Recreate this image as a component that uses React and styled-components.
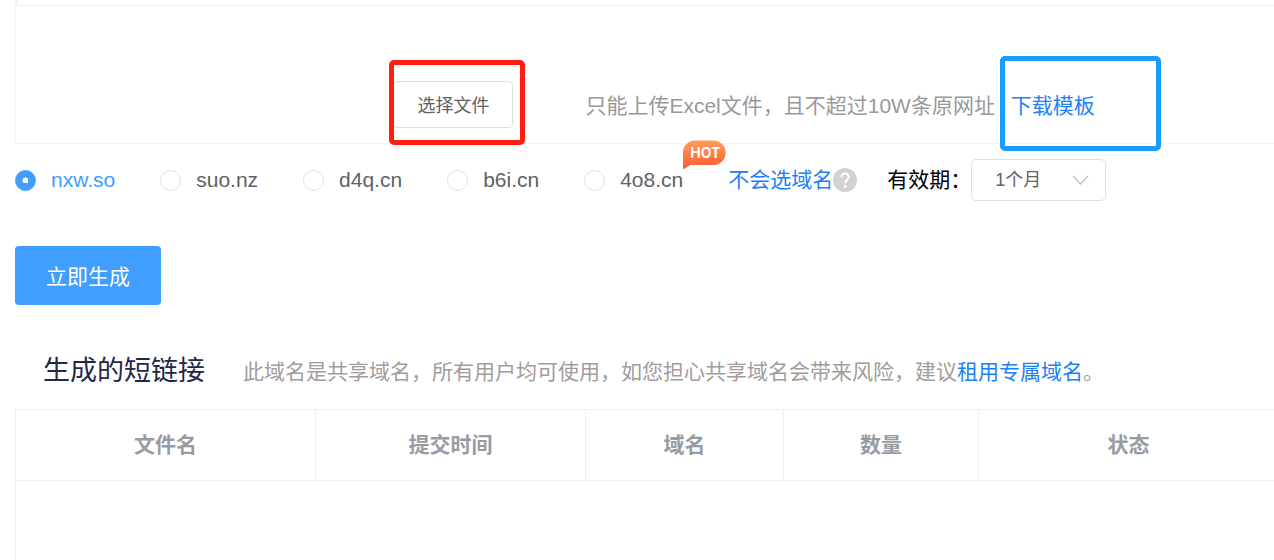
import React, { useState } from "react";
import styled, { createGlobalStyle } from "styled-components";

const GlobalStyle = createGlobalStyle`
  *, *::before, *::after { box-sizing: border-box; }
  body {
    margin: 0;
    overflow-x: hidden;
    background: #fff;
    color: #000;
    font: 21px/28px "Liberation Sans", "Noto Sans CJK SC", sans-serif;
  }
  button, select { font-family: inherit; }
`;

const Page = styled.main`
  padding-left: 15px;
`;

const UploadPanel = styled.section`
  border: solid #f5f5f5;
  border-width: 0 0 1px 1px;
`;

const PanelEdge = styled.div`
  height: 6px;
  border: solid #ebeef5;
  border-width: 0 0 1px 1px;
`;

const UploadRow = styled.div`
  display: flex;
  align-items: center;
  gap: 72px;
  padding: 75px 0 15px 30%;
  white-space: nowrap;
`;

const Marked = styled.span`
  position: relative;
  display: inline-block;
`;

const Highlight = styled.span`
  position: absolute;
  inset: ${(p) => p.$inset};
  border: 5px solid ${(p) => p.$color};
  border-radius: 5px;
  pointer-events: none;
`;

const FileButton = styled.button`
  display: block;
  padding: 0 23px 2px;
  height: 47px;
  border: 1px solid #dcdfe6;
  border-radius: 4px;
  background: #fff;
  color: #606266;
  font-size: 18px;
`;

const Hint = styled.p`
  margin: 0;
  padding-top: 2px;
  color: #999;
`;

const Link = styled.a`
  color: #2080f7;
  text-decoration: none;
`;

const TemplateLink = styled(Link)`
  margin-left: 10px;
`;

const Options = styled.form`
  display: flex;
  align-items: center;
  margin-top: 15px;
  white-space: nowrap;
`;

const Domains = styled.div`
  display: flex;
  gap: 45px;
  margin-right: 45px;
`;

const Domain = styled.label`
  position: relative;
  display: flex;
  align-items: center;
  gap: 15px;
  color: ${(p) => (p.$active ? "#409eff" : "#606266")};
`;

const Radio = styled.input`
  appearance: none;
  width: 21px;
  height: 21px;
  margin: 0;
  border: 1px solid #dcdfe6;
  border-radius: 50%;
  background: #fff;
  &:checked {
    border-color: #409eff;
    background: radial-gradient(circle, #fff 3px, #409eff 3px);
  }
`;

const HotBadge = styled.span`
  position: absolute;
  left: 100%;
  bottom: 25px;
  width: 44px;
  height: 29px;
  color: #fff;
  font: 700 14px/25px Inter, sans-serif;
  text-align: center;
  svg { position: absolute; inset: 0; }
`;

const HotText = styled.span`
  position: relative;
`;

const HelpLink = styled(Link)`
  display: flex;
  align-items: center;
  margin-right: 30px;
`;

const SelectBox = styled.span`
  position: relative;
  svg {
    position: absolute;
    right: 17px;
    top: 16px;
    pointer-events: none;
  }
`;

const Select = styled.select`
  display: block;
  appearance: none;
  width: 135px;
  height: 42px;
  padding: 0 23px;
  border: 1px solid #dcdfe6;
  border-radius: 5px;
  background: #fff;
  color: #606266;
  font-size: 18px;
`;

const Submit = styled.button`
  display: block;
  height: 59px;
  margin-top: 45px;
  padding: 0 31px 2px;
  border: 0;
  border-radius: 4px;
  background: #409eff;
  color: #fff;
  font-size: 21px;
`;

const ResultHead = styled.header`
  display: flex;
  align-items: center;
  gap: 38px;
  height: 104px;
  padding: 28px 0 0 28px;
  white-space: nowrap;
`;

const Title = styled.h2`
  margin: 0;
  color: #1f2846;
  font-size: 27px;
  font-weight: 400;
`;

const Notice = styled.p`
  margin: 0;
  padding-top: 2px;
  color: #a39c9c;
`;

const Table = styled.table`
  width: 100%;
  min-width: 1264px;
  table-layout: fixed;
  border-collapse: separate;
  border-spacing: 0;
  border: solid #ebeef5;
  border-width: 1px 0 0 1px;
`;

const Th = styled.th`
  width: ${(p) => p.$width}px;
  height: 71px;
  padding: 0;
  border: solid #ebeef5;
  border-width: 0 1px 1px 0;
  color: #989ba3;
  font-weight: 700;
`;

const EmptyCell = styled.td`
  height: 90px;
  padding: 0;
`;

const domains = ["nxw.so", "suo.nz", "d4q.cn", "b6i.cn", "4o8.cn"];

const columns = [
  ["文件名", 300],
  ["提交时间", 270],
  ["域名", 198],
  ["数量", 195],
  ["状态", 300],
];

function Hot() {
  return (
    <HotBadge>
      <svg width="44" height="29" viewBox="0 0 44 29" aria-hidden="true">
        <defs>
          <linearGradient id="hot" x1="0" y1="0" x2="0" y2="1">
            <stop offset="0" stopColor="#ff9d5c" />
            <stop offset="1" stopColor="#ff5a30" />
          </linearGradient>
        </defs>
        <path
          d="M12 0.5H31.5A12.3 12.3 0 0 1 31.5 25H7.5L0 29.5V12.5A12 12 0 0 1 12 0.5Z"
          fill="url(#hot)"
        />
      </svg>
      <HotText>HOT</HotText>
    </HotBadge>
  );
}

function HelpIcon() {
  return (
    <svg width="24" height="24" viewBox="0 0 24 24" aria-hidden="true">
      <circle cx="12" cy="12" r="12" fill="#d2d2d2" />
      <path
        d="M8.4 9.2C8.4 6.9 9.9 5.5 12 5.5S15.7 6.9 15.7 8.9C15.7 11.6 12.2 11.9 12.2 15.2"
        fill="none"
        stroke="#fff"
        strokeWidth="2"
      />
      <circle cx="12.2" cy="18.4" r="1.4" fill="#fff" />
    </svg>
  );
}

export default function App() {
  const [domain, setDomain] = useState(domains[0]);

  return (
    <Page>
      <GlobalStyle />
      <UploadPanel>
        <PanelEdge />
        <UploadRow>
          <Marked>
            <FileButton type="button">选择文件</FileButton>
            <Highlight $color="#ff1e10" $inset="-21px -12px -17px -4px" />
          </Marked>
          <Hint>
            只能上传Excel文件，且不超过10W条原网址{" "}
            <Marked>
              <TemplateLink href="#template">下载模板</TemplateLink>
              <Highlight $color="#1a9bff" $inset="-36px -66px -31px -1px" />
            </Marked>
          </Hint>
        </UploadRow>
      </UploadPanel>

      <Options>
        <Domains>
          {domains.map((name) => (
            <Domain key={name} $active={name === domain}>
              <Radio
                type="radio"
                name="domain"
                value={name}
                checked={name === domain}
                onChange={() => setDomain(name)}
              />
              {name}
              {name === "4o8.cn" && <Hot />}
            </Domain>
          ))}
        </Domains>
        <HelpLink href="#help">
          不会选域名
          <HelpIcon />
        </HelpLink>
        <label htmlFor="period">有效期：</label>
        <SelectBox>
          <Select id="period" defaultValue="1">
            <option value="1">1个月</option>
            <option value="3">3个月</option>
          </Select>
          <svg width="17" height="11" viewBox="0 0 17 11" aria-hidden="true">
            <path d="M1 1L8.5 9L16 1" fill="none" stroke="#c0c4cc" strokeWidth="1.4" />
          </svg>
        </SelectBox>
      </Options>

      <Submit type="button">立即生成</Submit>

      <ResultHead>
        <Title>生成的短链接</Title>
        <Notice>
          此域名是共享域名，所有用户均可使用，如您担心共享域名会带来风险，建议
          <Link href="#rent">租用专属域名</Link>。
        </Notice>
      </ResultHead>

      <Table>
        <thead>
          <tr>
            {columns.map(([name, width]) => (
              <Th key={name} $width={width} scope="col">
                {name}
              </Th>
            ))}
          </tr>
        </thead>
        <tbody>
          <tr>
            <EmptyCell colSpan={columns.length} />
          </tr>
        </tbody>
      </Table>
    </Page>
  );
}
